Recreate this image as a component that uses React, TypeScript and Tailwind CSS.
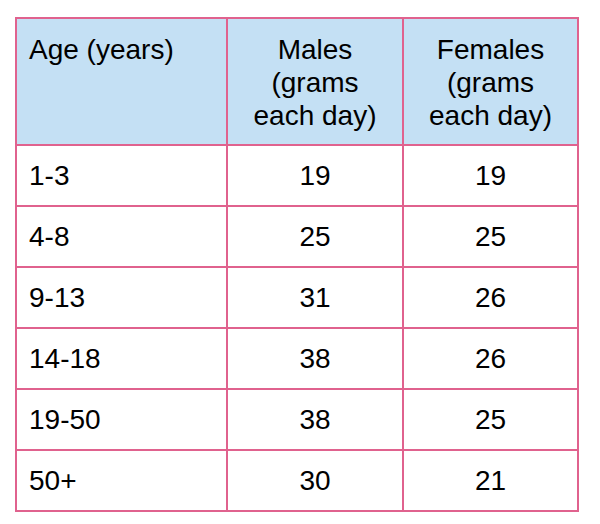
import React from "react";

const rows: [string, string, string][] = [
  ["1-3", "19", "19"],
  ["4-8", "25", "25"],
  ["9-13", "31", "26"],
  ["14-18", "38", "26"],
  ["19-50", "38", "25"],
  ["50+", "30", "21"],
];

export default function App() {
  return (
    <div className="w-[600px] h-[524px] bg-white pl-[15px] pt-[17px] font-['Liberation_Sans',Arial,sans-serif] text-[28px] leading-[33px] text-black">
      <div className="grid grid-cols-[209px_174px_173px] grid-rows-[125px_repeat(6,59px)] gap-[2px] p-[2px] bg-[#e0628e] w-fit">
        <div className="bg-[#c4e0f4] pl-[12px] pt-[14px]">Age (years)</div>
        <div className="bg-[#c4e0f4] pt-[14px] text-center">
          Males
          <br />
          (grams
          <br />
          each day)
        </div>
        <div className="bg-[#c4e0f4] pt-[14px] text-center">
          Females
          <br />
          (grams
          <br />
          each day)
        </div>
        {rows.map(([a, m, f]) => (
          <React.Fragment key={a}>
            <div className="bg-white pl-[12px] flex items-center">{a}</div>
            <div className="bg-white flex items-center justify-center">{m}</div>
            <div className="bg-white flex items-center justify-center">{f}</div>
          </React.Fragment>
        ))}
      </div>
    </div>
  );
}
